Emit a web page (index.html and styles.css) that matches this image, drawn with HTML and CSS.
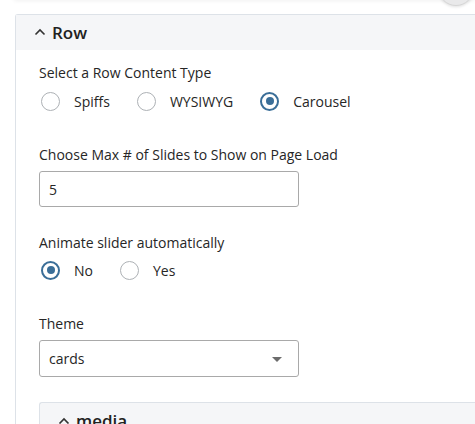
FILE: index.html
```html
<!DOCTYPE html>
<html>
<head>
<meta charset="utf-8">
<link rel="stylesheet" href="styles.css">
</head>
<body>
<div class="top-card"></div>
<div class="fab"></div>
<section class="panel">
  <header class="panel-head">
    <svg class="chev" width="12" height="8" viewBox="0 0 12 8"><path d="M1.5 6.5 L6 2 L10.5 6.5" fill="none" stroke="#333" stroke-width="1.6"/></svg>
    <span>Row</span>
  </header>
  <div class="panel-body">
    <div class="field radios-field">
      <div class="label">Select a Row Content Type</div>
      <div class="radios">
        <label class="radio"><span class="dot"></span>Spiffs</label>
        <label class="radio"><span class="dot"></span>WYSIWYG</label>
        <label class="radio"><span class="dot on"></span>Carousel</label>
      </div>
    </div>
    <div class="field">
      <div class="label">Choose Max # of Slides to Show on Page Load</div>
      <div class="input">5</div>
    </div>
    <div class="field radios-field tight">
      <div class="label">Animate slider automatically</div>
      <div class="radios">
        <label class="radio"><span class="dot on"></span>No</label>
        <label class="radio"><span class="dot"></span>Yes</label>
      </div>
    </div>
    <div class="field">
      <div class="label">Theme</div>
      <div class="input select">cards<span class="caret"></span></div>
    </div>
    <section class="sub-panel">
      <header class="sub-head">
        <svg class="chev" width="12" height="8" viewBox="0 0 12 8"><path d="M1.5 6.5 L6 2 L10.5 6.5" fill="none" stroke="#333" stroke-width="1.6"/></svg>
        <span>media</span>
      </header>
    </section>
  </div>
</section>
</body>
</html>
```

FILE: styles.css
```css
html, body {
  margin: 0;
  padding: 0;
  background: #fff;
  overflow: hidden;
  width: 475px;
  height: 424px;
}
body {
  font-family: "Open Sans", "Liberation Sans", sans-serif;
  color: #262626;
  font-size: 14px;
  position: relative;
}
.top-card {
  position: absolute;
  left: 14px;
  right: 0;
  top: -20px;
  height: 20px;
  box-shadow: 0 1px 4px rgba(0,0,0,0.06);
  background: #fff;
}
.fab {
  position: absolute;
  left: 438px;
  top: -30px;
  width: 34px;
  height: 34px;
  border-radius: 50%;
  background: #e9e9ea;
  border: 1px solid #d6d6d6;
  box-shadow: 0 1px 3px rgba(0,0,0,0.12);
}
.panel {
  margin: 14px 0 0 15px;
  width: 480px;
  border: 1px solid #dde2e8;
  border-right: none;
  border-bottom: none;
  border-radius: 3px 0 0 0;
  min-height: 420px;
}
.panel-head {
  height: 35px;
  background: #f5f6f8;
  display: flex;
  align-items: center;
  padding-left: 18px;
  font-size: 17px;
  font-weight: 600;
  color: #222;
}
.panel-head .chev {
  margin-right: 6px;
  margin-top: -1px;
}
.panel-body {
  padding: 13px 0 0 23px;
}
.field {
  margin-bottom: 26px;
}
.radios-field {
  margin-bottom: 34px;
}
.label {
  line-height: 20px;
  height: 20px;
  margin-bottom: 6px;
}
.radios-field .label {
  margin-bottom: 8px;
}
.radios-field.tight .label {
  margin-bottom: 7px;
}
.radios {
  display: flex;
  height: 20px;
  align-items: center;
}
.radio {
  display: flex;
  align-items: center;
  margin-right: 25px;
}
.dot {
  box-sizing: border-box;
  width: 19px;
  height: 19px;
  border-radius: 50%;
  border: 1.5px solid #adb1b5;
  background: #fff;
  margin-right: 14px;
  margin-left: 2px;
  position: relative;
}
.dot.on {
  border: 2px solid #3a6e98;
}
.dot.on::after {
  content: "";
  position: absolute;
  left: 3.5px;
  top: 3.5px;
  width: 8px;
  height: 8px;
  border-radius: 50%;
  background: #3a6e98;
}
.input {
  box-sizing: border-box;
  width: 260px;
  height: 36px;
  border: 1px solid #a9a9a9;
  border-radius: 3px;
  padding-left: 9px;
  display: flex;
  align-items: center;
  position: relative;
}
.select {
  height: 37px;
}
.caret {
  position: absolute;
  right: 16px;
  top: 16px;
  width: 0;
  height: 0;
  border-left: 5px solid transparent;
  border-right: 5px solid transparent;
  border-top: 5px solid #6c6c6c;
}
.sub-panel {
  margin-top: -1px;
  border: 1px solid #dde2e8;
  border-right: none;
  border-radius: 3px 0 0 0;
  background: #f5f6f8;
  height: 40px;
}
.sub-head {
  display: flex;
  align-items: center;
  padding: 6px 0 0 18px;
  font-size: 17px;
  font-weight: 600;
  color: #222;
}
.sub-head .chev {
  margin-right: 6px;
}
```
